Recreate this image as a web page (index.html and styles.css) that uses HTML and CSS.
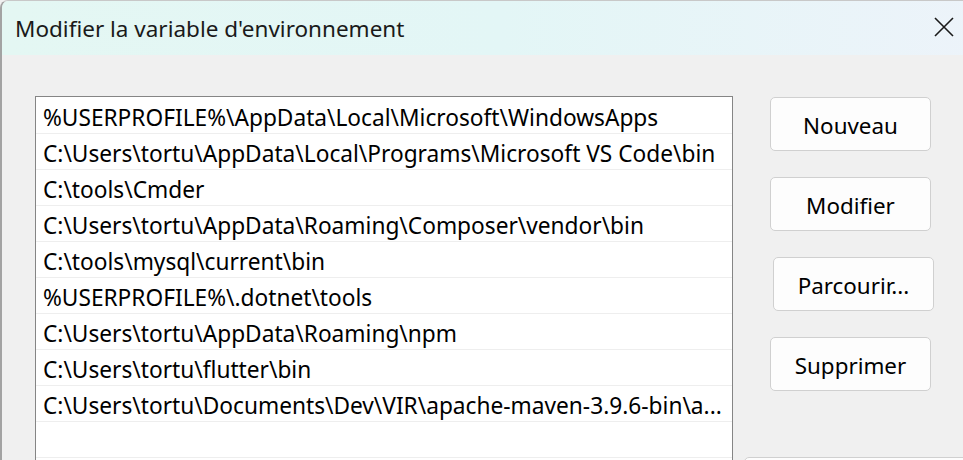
FILE: index.html
```html
<!DOCTYPE html>
<html lang="fr">
<head>
<meta charset="utf-8">
<title>Modifier la variable d'environnement</title>
<link rel="stylesheet" href="styles.css">
</head>
<body>
<div class="window">
  <div class="titlebar">
    <span class="title">Modifier la variable d'environnement</span>
    <span class="close" aria-label="Fermer">
      <svg width="20" height="20" viewBox="0 0 20 20"><path d="M1 1 L19 19 M19 1 L1 19" stroke="#1a1a1a" stroke-width="1.6" fill="none"/></svg>
    </span>
  </div>
  <div class="content">
    <div class="list">
      <div class="row">%USERPROFILE%\AppData\Local\Microsoft\WindowsApps</div>
      <div class="row">C:\Users\tortu\AppData\Local\Programs\Microsoft VS Code\bin</div>
      <div class="row">C:\tools\Cmder</div>
      <div class="row">C:\Users\tortu\AppData\Roaming\Composer\vendor\bin</div>
      <div class="row">C:\tools\mysql\current\bin</div>
      <div class="row">%USERPROFILE%\.dotnet\tools</div>
      <div class="row">C:\Users\tortu\AppData\Roaming\npm</div>
      <div class="row">C:\Users\tortu\flutter\bin</div>
      <div class="row">C:\Users\tortu\Documents\Dev\VIR\apache-maven-3.9.6-bin\a...</div>
      <div class="row"></div>
    </div>
    <div class="buttons">
      <button class="btn">Nouveau</button>
      <button class="btn">Modifier</button>
      <button class="btn btn-shift">Parcourir...</button>
      <button class="btn">Supprimer</button>
      <button class="btn btn-wide" aria-label="Déplacer vers le haut"></button>
    </div>
  </div>
</div>
</body>
</html>
```
FILE: styles.css
```css
html, body {
  margin: 0;
  padding: 0;
  width: 963px;
  height: 460px;
  overflow: hidden;
  background: #f0f0f0;
}

.window {
  width: 1000px;
  height: 460px;
  border-left: 2px solid #a3a3a3;
  border-top: 1px solid #c8c8c8;
  border-top-left-radius: 8px;
  background: #f0f0f0;
  font-family: "Noto Sans", "Open Sans", sans-serif;
  color: #000;
  box-sizing: border-box;
  overflow: hidden;
}

.titlebar {
  height: 54px;
  display: flex;
  align-items: center;
  background: linear-gradient(90deg, #e4f7f3 0%, #e3f6f6 50%, #edf3fa 100%);
  position: relative;
}

.title {
  margin-left: 13px;
  font-size: 22.5px;
  color: #1a1a1a;
  margin-top: 1px;
}

.close {
  position: absolute;
  left: 932px;
  top: 16px;
  width: 20px;
  height: 20px;
  display: block;
}
.close svg { display: block; }

.content {
  display: flex;
  align-items: flex-start;
  padding-top: 41px;
  padding-left: 33px;
}

.list {
  width: 698px;
  height: 400px;
  box-sizing: border-box;
  border: 1px solid #858585;
  background: #fff;
  padding-top: 1px;
  flex: none;
}

.row {
  height: 36px;
  box-sizing: border-box;
  border-bottom: 1px solid #eeeeee;
  padding-left: 7px;
  padding-top: 3px;
  font-size: 22.7px;
  line-height: 34px;
  white-space: nowrap;
  overflow: hidden;
}

.buttons {
  display: flex;
  flex-direction: column;
  align-items: flex-start;
  margin-left: 37px;
  margin-top: 1px;
}

.btn {
  width: 161px;
  height: 54px;
  box-sizing: border-box;
  border: 1px solid #d0d0d0;
  border-radius: 5px;
  background: #fdfdfd;
  font-family: "Noto Sans", "Open Sans", sans-serif;
  font-size: 22.4px;
  color: #000;
  padding: 2px 0 0 0;
  margin-bottom: 26px;
  flex: none;
}

.btn-shift { margin-left: 3px; }

.btn-wide {
  width: 240px;
  margin-left: -26px;
  margin-top: 40px;
}
```
